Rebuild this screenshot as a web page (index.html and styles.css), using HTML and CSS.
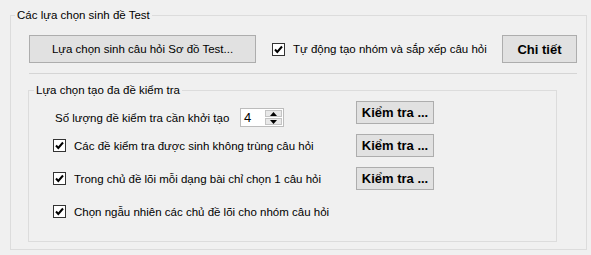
FILE: index.html
```html
<!DOCTYPE html>
<html lang="vi">
<head>
    <meta charset="UTF-8">
    <title>Các lựa chọn sinh đề Test</title>
    <link rel="stylesheet" href="styles.css">
</head>
<body>
    <fieldset class="group outer">
        <legend>Các lựa chọn sinh đề Test</legend>

        <!-- Top row -->
        <div class="top-row">
            <button class="btn btn-wide">Lựa chọn sinh câu hỏi Sơ đồ Test...</button>
            <label class="check check-auto">
                <svg class="box" width="13" height="13" viewBox="0 0 13 13"><rect x="0.5" y="0.5" width="12" height="12" fill="#fff" stroke="#333"/><path d="M3 6.5 L5.3 9 L10 3.5" fill="none" stroke="#000" stroke-width="2"/></svg>
                Tự động tạo nhóm và sắp xếp câu hỏi
            </label>
            <button class="btn btn-bold btn-detail">Chi tiết</button>
        </div>

        <div class="separator"></div>

        <!-- Multi test options -->
        <fieldset class="group inner">
            <legend>Lựa chọn tạo đa đề kiểm tra</legend>

            <div class="opt-row">
                <div class="count">
                    <span>Số lượng đề kiểm tra cần khởi tạo</span>
                    <div class="spin">
                        <span class="spin-value">4</span>
                        <div class="spin-btns">
                            <span class="spin-btn"><svg width="7" height="4" viewBox="0 0 7 4"><path d="M0 4 L3.5 0 L7 4 Z" fill="#000"/></svg></span>
                            <span class="spin-btn"><svg width="7" height="4" viewBox="0 0 7 4"><path d="M0 0 L3.5 4 L7 0 Z" fill="#000"/></svg></span>
                        </div>
                    </div>
                </div>
                <button class="btn btn-bold btn-check">Kiểm tra ...</button>
            </div>

            <div class="opt-row">
                <label class="check">
                    <svg class="box" width="13" height="13" viewBox="0 0 13 13"><rect x="0.5" y="0.5" width="12" height="12" fill="#fff" stroke="#333"/><path d="M3 6.5 L5.3 9 L10 3.5" fill="none" stroke="#000" stroke-width="2"/></svg>
                    Các đề kiểm tra được sinh không trùng câu hỏi
                </label>
                <button class="btn btn-bold btn-check">Kiểm tra ...</button>
            </div>

            <div class="opt-row">
                <label class="check">
                    <svg class="box" width="13" height="13" viewBox="0 0 13 13"><rect x="0.5" y="0.5" width="12" height="12" fill="#fff" stroke="#333"/><path d="M3 6.5 L5.3 9 L10 3.5" fill="none" stroke="#000" stroke-width="2"/></svg>
                    Trong chủ đề lõi mỗi dạng bài chỉ chọn 1 câu hỏi
                </label>
                <button class="btn btn-bold btn-check">Kiểm tra ...</button>
            </div>

            <div class="opt-row">
                <label class="check">
                    <svg class="box" width="13" height="13" viewBox="0 0 13 13"><rect x="0.5" y="0.5" width="12" height="12" fill="#fff" stroke="#333"/><path d="M3 6.5 L5.3 9 L10 3.5" fill="none" stroke="#000" stroke-width="2"/></svg>
                    Chọn ngẫu nhiên các chủ đề lõi cho nhóm câu hỏi
                </label>
            </div>
        </fieldset>
    </fieldset>
</body>
</html>
```

FILE: styles.css
```css
* {
    box-sizing: border-box;
}

body {
    margin: 0;
    padding: 8px 3px 0 10px;
    background-color: #f0f0f0;
    font-family: "Liberation Sans", Arial, sans-serif;
    font-size: 11.5px;
    color: #000;
}

/* Group boxes */
.group {
    border: 1px solid #dcdcdc;
    margin: 0;
    min-width: 0;
}

.group legend {
    padding: 0 2px;
    line-height: 14px;
}

.outer {
    width: 577px;
    padding: 13px 9px 7px 18px;
}

.outer > legend {
    margin-left: -14px;
}

.inner {
    margin: 9px 20px 0 -1px;
    padding: 4px 122px 18px 24px;
}

.inner > legend {
    margin-left: -19px;
}

/* Buttons */
.btn {
    font-family: "Liberation Sans", Arial, sans-serif;
    font-size: 11.5px;
    color: #000;
    background-color: #e1e1e1;
    border: 1px solid #adadad;
    border-radius: 0;
    padding: 0;
    margin: 0;
}

.btn-bold {
    font-weight: bold;
    font-size: 13px;
}

.btn-wide {
    width: 227px;
    height: 28px;
}

.btn-detail {
    width: 75px;
    height: 28px;
    margin-left: auto;
}

.btn-check {
    width: 78px;
    height: 23px;
    margin-left: auto;
}

/* Top row */
.top-row {
    display: flex;
    align-items: center;
    height: 28px;
}

.check {
    display: flex;
    align-items: center;
    gap: 8px;
    white-space: nowrap;
}

.check-auto {
    margin-left: 16px;
}

.box {
    flex: 0 0 13px;
}

.separator {
    margin-top: 10px;
    height: 1px;
    background-color: #d5d5d5;
}

/* Option rows */
.opt-row {
    display: flex;
    align-items: center;
    height: 23px;
    margin-bottom: 10px;
}

.opt-row:last-child {
    margin-bottom: 0;
}

.count {
    display: flex;
    align-items: center;
    align-self: flex-start;
    margin-top: 7px;
    padding-left: 2px;
    width: 231px;
}

/* Spin box */
.spin {
    display: flex;
    margin-left: auto;
    width: 44px;
    height: 19px;
    border: 1px solid #bcbcbc;
    background-color: #fff;
}

.spin-value {
    flex: 1;
    padding-left: 3px;
    line-height: 17px;
    font-size: 13px;
}

.spin-btns {
    display: flex;
    flex-direction: column;
    width: 19px;
    padding: 1px;
    gap: 1px;
}

.spin-btn {
    flex: 1;
    display: flex;
    align-items: center;
    justify-content: center;
    background-color: #e8e8e8;
    border: 1px solid #c4c4c4;
}
```
